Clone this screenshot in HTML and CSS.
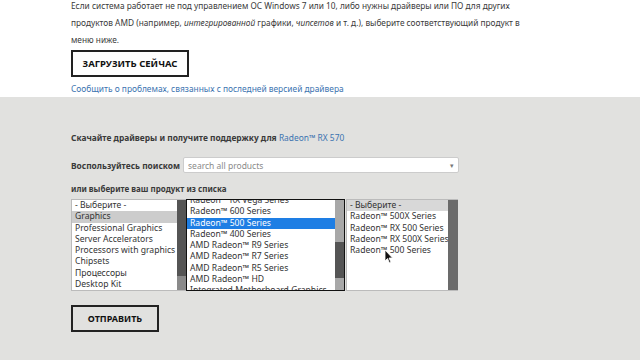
FILE: index.html
```html
<!DOCTYPE html>
<html lang="ru">
<head>
    <meta charset="UTF-8">
    <meta name="viewport" content="width=device-width, initial-scale=1.0">
    <title>Драйверы и поддержка</title>
    <link rel="stylesheet" href="styles.css">
</head>
<body>
    <div class="top">
        <p class="intro">Если система работает не под управлением ОС Windows 7 или 10, либо нужны драйверы или ПО для других<br>
        продуктов AMD (например, <em>интегрированной</em> графики, <em>чипсетов</em> и т. д.), выберите соответствующий продукт в<br>
        меню ниже.</p>
        <button class="btn">ЗАГРУЗИТЬ СЕЙЧАС</button>
        <a class="report" href="#">Сообщить о проблемах, связанных с последней версией драйвера</a>
    </div>

    <div class="finder">
        <p class="title">Скачайте драйверы и получите поддержку для <a href="#">Radeon™ RX 570</a></p>

        <div class="search-row">
            <span class="label">Воспользуйтесь поиском</span>
            <div class="search">
                <span>search all products</span>
                <span class="arrow">▾</span>
            </div>
        </div>

        <p class="label list-label">или выберите ваш продукт из списка</p>

        <div class="lists">
            <div class="listbox first">
                <ul class="items">
                    <li>- Выберите -</li>
                    <li class="picked">Graphics</li>
                    <li>Professional Graphics</li>
                    <li>Server Accelerators</li>
                    <li>Processors with graphics</li>
                    <li>Chipsets</li>
                    <li>Процессоры</li>
                    <li>Desktop Kit</li>
                </ul>
                <div class="scroll one"><div class="thumb"></div></div>
            </div>
            <div class="listbox second">
                <ul class="items scrolled">
                    <li>Radeon™ RX Vega Series</li>
                    <li>Radeon™ 600 Series</li>
                    <li class="active">Radeon™ 500 Series</li>
                    <li>Radeon™ 400 Series</li>
                    <li>AMD Radeon™ R9 Series</li>
                    <li>AMD Radeon™ R7 Series</li>
                    <li>AMD Radeon™ R5 Series</li>
                    <li>AMD Radeon™ HD</li>
                    <li>Integrated Motherboard Graphics</li>
                </ul>
                <div class="scroll two"><div class="thumb"></div></div>
            </div>
            <div class="listbox third">
                <ul class="items">
                    <li class="head">- Выберите -</li>
                    <li>Radeon™ 500X Series</li>
                    <li>Radeon™ RX 500 Series</li>
                    <li>Radeon™ RX 500X Series</li>
                    <li>Radeon™ 500 Series</li>
                </ul>
                <div class="scroll three"></div>
                <svg class="cursor" width="10" height="15" viewBox="0 0 10 15">
                    <path d="M1 1 L1 12 L3.5 9.5 L5.5 14 L7 13.3 L5 9 L8.5 9 Z" fill="#111" stroke="#fff" stroke-width="0.8"/>
                </svg>
            </div>
        </div>

        <button class="btn send">ОТПРАВИТЬ</button>
    </div>
</body>
</html>
```

FILE: styles.css
```css
body {
    margin: 0;
    font-family: "Noto Sans", "Open Sans", sans-serif;
    font-stretch: 87%;
    color: #3a3a3a;
    height: 360px;
    overflow: hidden;
}

.top {
    background: #fff;
    padding: 0 71px;
    height: 100px;
}

.intro {
    margin: -3px 0 0;
    font-size: 8.3px;
    line-height: 17px;
    white-space: nowrap;
}

.btn {
    display: block;
    margin-top: 2px;
    width: 118px;
    height: 27px;
    background: transparent;
    border: 2px solid #222;
    font-family: "Noto Sans", "Open Sans", sans-serif;
    font-stretch: 87%;
    font-weight: 700;
    font-size: 9.5px;
    color: #111;
    padding: 0;
}

.report {
    display: block;
    margin-top: 6px;
    font-size: 8.4px;
    color: #3b73b0;
    text-decoration: none;
}

.finder {
    background: #e1e1df;
    height: 260px;
    padding: 35px 71px 0;
}

.title {
    margin: 0;
    font-size: 8.4px;
    font-weight: 700;
}

.title a {
    color: #3b73b0;
    font-weight: 400;
    text-decoration: none;
}

.label {
    font-size: 8.4px;
    font-weight: 700;
}

.search-row {
    display: flex;
    align-items: center;
    gap: 3px;
    margin-top: 14px;
}

.search {
    flex: 0 0 266px;
    height: 14px;
    background: #fff;
    border: 1px solid #ccc;
    border-radius: 2px;
    display: flex;
    align-items: center;
    justify-content: space-between;
    padding: 0 4px;
    font-size: 8.5px;
    color: #8a8a8a;
}

.arrow {
    font-size: 7px;
    color: #777;
}

.list-label {
    margin: 10px 0 0;
    font-size: 8px;
}

.lists {
    display: flex;
    margin-top: 5px;
    height: 92px;
}

.listbox {
    position: relative;
    display: flex;
    overflow: hidden;
    background: #fff;
    box-sizing: border-box;
}

.listbox.first {
    width: 115px;
    border: 1px solid #bbb;
    border-right: none;
}

.listbox.second {
    width: 159px;
    border: 1px solid #111;
}

.listbox.third {
    width: 112px;
    margin-left: 1px;
    border: 1px solid #bbb;
    border-right: none;
}

.items {
    flex: 1;
    list-style: none;
    margin: 0;
    padding: 0;
    font-size: 8.6px;
    line-height: 11.3px;
    color: #333;
    white-space: nowrap;
    overflow: hidden;
}

.items li {
    padding-left: 3px;
}

.items.scrolled {
    margin-top: -5px;
}

.items .picked {
    background: #ccc;
}

.items .active {
    background: #1e7ee4;
    color: #fff;
}

.items .head {
    background: #d8d8d8;
}

.scroll {
    flex: 0 0 9px;
    background: #8a8a8a;
    display: flex;
    flex-direction: column;
}

.scroll.one .thumb {
    height: 76px;
    background: #555;
}

.scroll.two {
    background: #a8a8a8;
    padding-top: 42px;
}

.scroll.two .thumb {
    height: 36px;
    background: #555;
}

.scroll.three {
    flex-basis: 10px;
    background: #6b6b6b;
}

.cursor {
    position: absolute;
    left: 37px;
    top: 49px;
}

.btn.send {
    margin-top: 14px;
    width: 88px;
    height: 27px;
    font-size: 9px;
}
```
